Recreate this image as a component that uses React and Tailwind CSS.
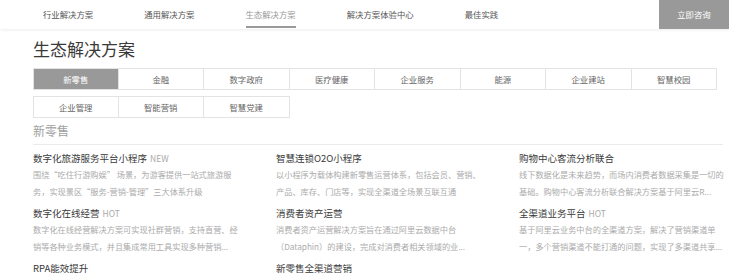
import React from 'react';

const NAV = ["行业解决方案", "通用解决方案", "生态解决方案", "解决方案体验中心", "最佳实践"];
const TABS = ["新零售", "金融", "数字政府", "医疗健康", "企业服务", "能源", "企业建站", "智慧校园", "企业管理", "智能营销", "智慧党建"];

const ITEMS = [
  { title: "数字化旅游服务平台小程序", tag: "NEW", desc: "围绕“吃住行游购娱” 场景，为游客提供一站式旅游服务，实现景区“服务-营销-管理”三大体系升级" },
  { title: "智慧连锁O2O小程序", desc: "以小程序为载体构建新零售运营体系，包括会员、营销、产品、库存、门店等，实现全渠道全场景互联互通" },
  { title: "购物中心客流分析联合", desc: "线下数据化是未来趋势，而场内消费者数据采集是一切的基础。购物中心客流分析联合解决方案基于阿里云R..." },
  { title: "数字化在线经营", tag: "HOT", desc: "数字化在线经营解决方案可实现社群营销，支持直营、经销等各种业务模式，并且集成常用工具实现多种营销..." },
  { title: "消费者资产运营", desc: "消费者资产运营解决方案旨在通过阿里云数据中台（Dataphin）的建设，完成对消费者相关领域的业..." },
  { title: "全渠道业务平台", tag: "HOT", desc: "基于阿里云业务中台的全渠道方案，解决了营销渠道单一，多个营销渠道不能打通的问题，实现了多渠道共享..." },
  { title: "RPA能效提升", desc: "" },
  { title: "新零售全渠道营销", desc: "" },
];

export default function App() {
  return (
    <div className="w-[729px] h-[274px] overflow-hidden bg-white text-[#333]" style={{ fontFamily: '"Noto Sans CJK SC", "Noto Sans", sans-serif' }}>
      {/* top nav */}
      <div className="h-[29px] flex items-stretch shadow-[0_1px_3px_rgba(0,0,0,0.08)] relative">
        <div className="flex-1 flex items-stretch pl-[43px] gap-[51px]">
          {NAV.map((n, i) => (
            <div key={n} className={`relative flex items-center text-[8.4px] ${i === 2 ? 'text-[#9a9a9a]' : 'text-[#555]'}`}>
              {n}
              {i === 2 && <span className="absolute left-0 right-0 bottom-[1px] h-[2px] bg-[#999]" />}
            </div>
          ))}
        </div>
        <div className="w-[70px] bg-[#999] text-white text-[8.4px] flex items-center justify-center">立即咨询</div>
      </div>

      <div className="pl-[33px]">
        <h1 className="mt-[8px] text-[17px] leading-[24px] text-[#3a3a3a]">生态解决方案</h1>

        {/* tabs */}
        <div className="mt-[7px] w-[684px] grid grid-cols-8 gap-y-[6px]">
          {TABS.map((t, i) => (
            <div
              key={t}
              className={`h-[22px] flex items-center justify-center text-[8.4px] border-y border-[#e3e3e3] ${i % 8 === 0 ? 'border-l' : ''} border-r ${i === 0 ? 'bg-[#999] text-white border-[#999]' : 'text-[#666]'}`}
            >
              {t}
            </div>
          ))}
        </div>

        <div className="mt-[5px] text-[12px] leading-[16px] text-[#a0a0a0]">新零售</div>
        <div className="mt-[5px] w-[690px] h-px bg-[#ebebeb]" />

        {/* items */}
        <div className="mt-[6px] grid grid-cols-[206px_206px_206px] gap-x-[37px]">
          {ITEMS.map((it) => (
            <div key={it.title} className="h-[55px]">
              <div className="text-[9.5px] leading-[14px] text-[#3a3a3a]">
                {it.title}
                {it.tag && <span className="ml-[3px] text-[8.5px] text-[#aaa]">{it.tag}</span>}
              </div>
              <p className="mt-[1px] text-[8.2px] leading-[17px] text-[#ababab] line-clamp-2">{it.desc}</p>
            </div>
          ))}
        </div>
      </div>
    </div>
  );
}
